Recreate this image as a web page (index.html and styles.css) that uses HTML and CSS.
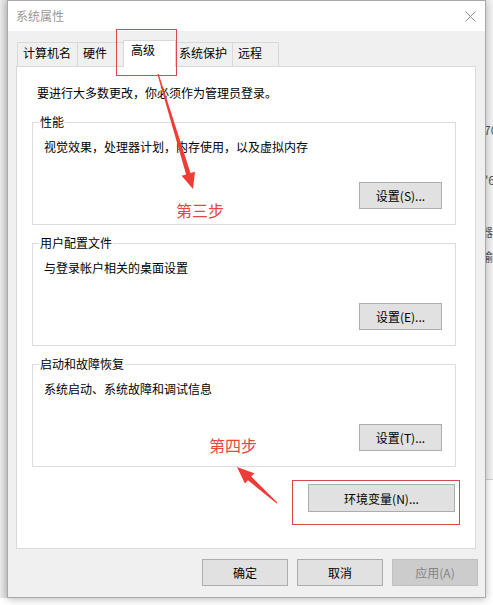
FILE: index.html
```html
<!DOCTYPE html>
<html>
<head>
    <meta charset="utf-8">
    <title>系统属性</title>
    <link rel="stylesheet" href="styles.css">
</head>
<body>

<div class="screen">
  <div class="edge-left"></div>

  <div class="dialog">
    <div class="titlebar">
      <span class="title">系统属性</span>
      <svg class="close" width="11" height="11" viewBox="0 0 11 11">
        <path d="M0.5 0.5L10.5 10.5M10.5 0.5L0.5 10.5" stroke="#8c8c8c" stroke-width="1" fill="none"/>
      </svg>
    </div>

    <div class="dialog-body">
      <div class="tabs">
        <div class="tab tab-name">计算机名</div>
        <div class="tab tab-hw">硬件</div>
        <div class="tab tab-adv active">高级</div>
        <div class="tab tab-protect">系统保护</div>
        <div class="tab tab-remote">远程</div>
      </div>

      <div class="panel">
        <p class="notice">要进行大多数更改，你必须作为管理员登录。</p>

        <div class="group">
          <span class="group-title">性能</span>
          <p class="group-text">视觉效果，处理器计划，内存使用，以及虚拟内存</p>
          <div class="group-actions">
            <button class="btn btn-set">设置(S)...</button>
          </div>
        </div>

        <div class="group">
          <span class="group-title">用户配置文件</span>
          <p class="group-text">与登录帐户相关的桌面设置</p>
          <div class="group-actions">
            <button class="btn btn-set">设置(E)...</button>
          </div>
        </div>

        <div class="group">
          <span class="group-title">启动和故障恢复</span>
          <p class="group-text">系统启动、系统故障和调试信息</p>
          <div class="group-actions">
            <button class="btn btn-set">设置(T)...</button>
          </div>
        </div>

        <div class="env-row">
          <button class="btn btn-env">环境变量(N)...</button>
        </div>
      </div>

      <div class="footer">
        <button class="btn btn-footer">确定</button>
        <button class="btn btn-footer">取消</button>
        <button class="btn btn-footer" disabled>应用(A)</button>
      </div>
    </div>
  </div>

  <div class="edge-right">
    <span class="bg-text bg-1">70</span>
    <span class="bg-text bg-2">'6</span>
    <span class="bg-text bg-3">器</span>
    <span class="bg-text bg-4">输</span>
  </div>

  <!-- annotations drawn on top of the screenshot -->
  <div class="annotations">
    <svg class="arrows" width="493" height="605" viewBox="0 0 493 605">
      <polygon points="158.6,73.8 190.5,173 195,171.7 193,189 181.6,175.7 186.1,174.4 157.4,74.2" fill="#f03c36"/>
      <polygon points="277.3,502.6 251.3,476.5 254.3,473.2 237,467 244.9,483.6 247.9,480.3 276.7,503.4" fill="#f03c36"/>
    </svg>
    <div class="mark mark-tab"></div>
    <div class="mark mark-env"></div>
    <span class="step step-3">第三步</span>
    <span class="step step-4">第四步</span>
  </div>
</div>

</body>
</html>
```

FILE: styles.css
```css
* {
    box-sizing: border-box;
}
body {
    margin: 0;
    background: #fff;
    font-family: "Noto Sans CJK SC", "Microsoft YaHei", sans-serif;
    font-size: 12px;
    color: #000;
}
p {
    margin: 0;
}
.screen {
    position: relative;
    display: flex;
    width: 493px;
    height: 605px;
    overflow: hidden;
}
.edge-left {
    width: 7px;
    height: 598px;
    background: linear-gradient(to right, #ececec, #dcdcdc);
}
.edge-right {
    flex: 1;
    height: 480px;
    background: #f2f2f2;
    border-bottom: 1px solid #cfcfcf;
    overflow: hidden;
    display: flex;
    flex-direction: column;
}
.bg-text {
    display: block;
    line-height: 16px;
    color: #555;
    white-space: nowrap;
    margin-left: -2px;
}
.bg-1 { margin-top: 122px; }
.bg-2 { margin-top: 34px; margin-left: -1px; }
.bg-3 { margin-top: 36px; margin-left: -5px; }
.bg-4 { margin-top: 9px; margin-left: -5px; }

.dialog {
    position: relative;
    z-index: 1;
    width: 479px;
    height: 598px;
    border: 1px solid #a9a9a9;
    background: #f0f0f0;
    box-shadow: 0 1px 8px rgba(0, 0, 0, .28);
    display: flex;
    flex-direction: column;
}
.titlebar {
    height: 30px;
    background: #fff;
    display: flex;
    align-items: center;
    justify-content: space-between;
    padding: 0 9px 0 8px;
}
.title {
    color: #999;
    line-height: 16px;
}
.close {
    display: block;
}
.dialog-body {
    padding: 9px 9px 11px 8px;
}

.tabs {
    display: flex;
    align-items: flex-end;
    padding-left: 1px;
}
.tab {
    height: 24px;
    border: 1px solid #d9d9d9;
    border-bottom: none;
    background: #f0f0f0;
    padding: 2px 0 0 5px;
    line-height: 16px;
    margin-right: -1px;
    white-space: nowrap;
}
.tab-name { width: 61px; }
.tab-hw { width: 49px; }
.tab-protect { width: 60px; }
.tab-remote { width: 47px; }
.tab.active {
    position: relative;
    z-index: 2;
    width: 53px;
    height: 27px;
    margin: 0 -3px -1px -2px;
    padding: 1px 0 0 7px;
    background: #fff;
}

.panel {
    border: 1px solid #d9d9d9;
    background: #fff;
    padding: 18px 19px 36px 15px;
    display: flex;
    flex-direction: column;
}
.notice {
    line-height: 16px;
    margin-left: 5px;
}
.group {
    position: relative;
    border: 1px solid #dcdcdc;
    padding: 16px 13px 15px 11px;
    margin-top: 18px;
}
.notice + .group {
    margin-top: 21px;
}
.group-title {
    position: absolute;
    top: -9px;
    left: 6px;
    padding: 0 1px;
    background: #fff;
    line-height: 16px;
}
.group-text {
    line-height: 16px;
}
.group-actions {
    display: flex;
    justify-content: flex-end;
    margin-top: 27px;
}

.btn {
    height: 27px;
    border: 1px solid #adadad;
    background: #e1e1e1;
    font: inherit;
    color: #000;
    padding: 0;
    text-align: center;
}
.btn:disabled {
    background: #cccccc;
    border-color: #bfbfbf;
    color: #838383;
}
.btn-set {
    width: 83px;
}
.env-row {
    display: flex;
    justify-content: flex-end;
    margin-top: 17px;
    padding-right: 1px;
}
.btn-env {
    width: 147px;
    height: 28px;
}
.footer {
    display: flex;
    justify-content: flex-end;
    gap: 9px;
    margin-top: 10px;
    margin-right: -2px;
}
.btn-footer {
    width: 86px;
}

.annotations {
    position: absolute;
    top: 0;
    left: 0;
    width: 493px;
    height: 605px;
    z-index: 5;
    pointer-events: none;
}
.arrows {
    position: absolute;
    top: 0;
    left: 0;
}
.mark {
    position: absolute;
    border: 1px solid #d84a4a;
}
.mark-tab {
    left: 116px;
    top: 29px;
    width: 61px;
    height: 47px;
}
.mark-env {
    left: 292px;
    top: 480px;
    width: 168px;
    height: 45px;
}
.step {
    position: absolute;
    font-size: 16px;
    line-height: 16px;
    color: #e8463f;
    white-space: nowrap;
}
.step-3 {
    left: 176px;
    top: 202px;
}
.step-4 {
    left: 209px;
    top: 437px;
}
```
